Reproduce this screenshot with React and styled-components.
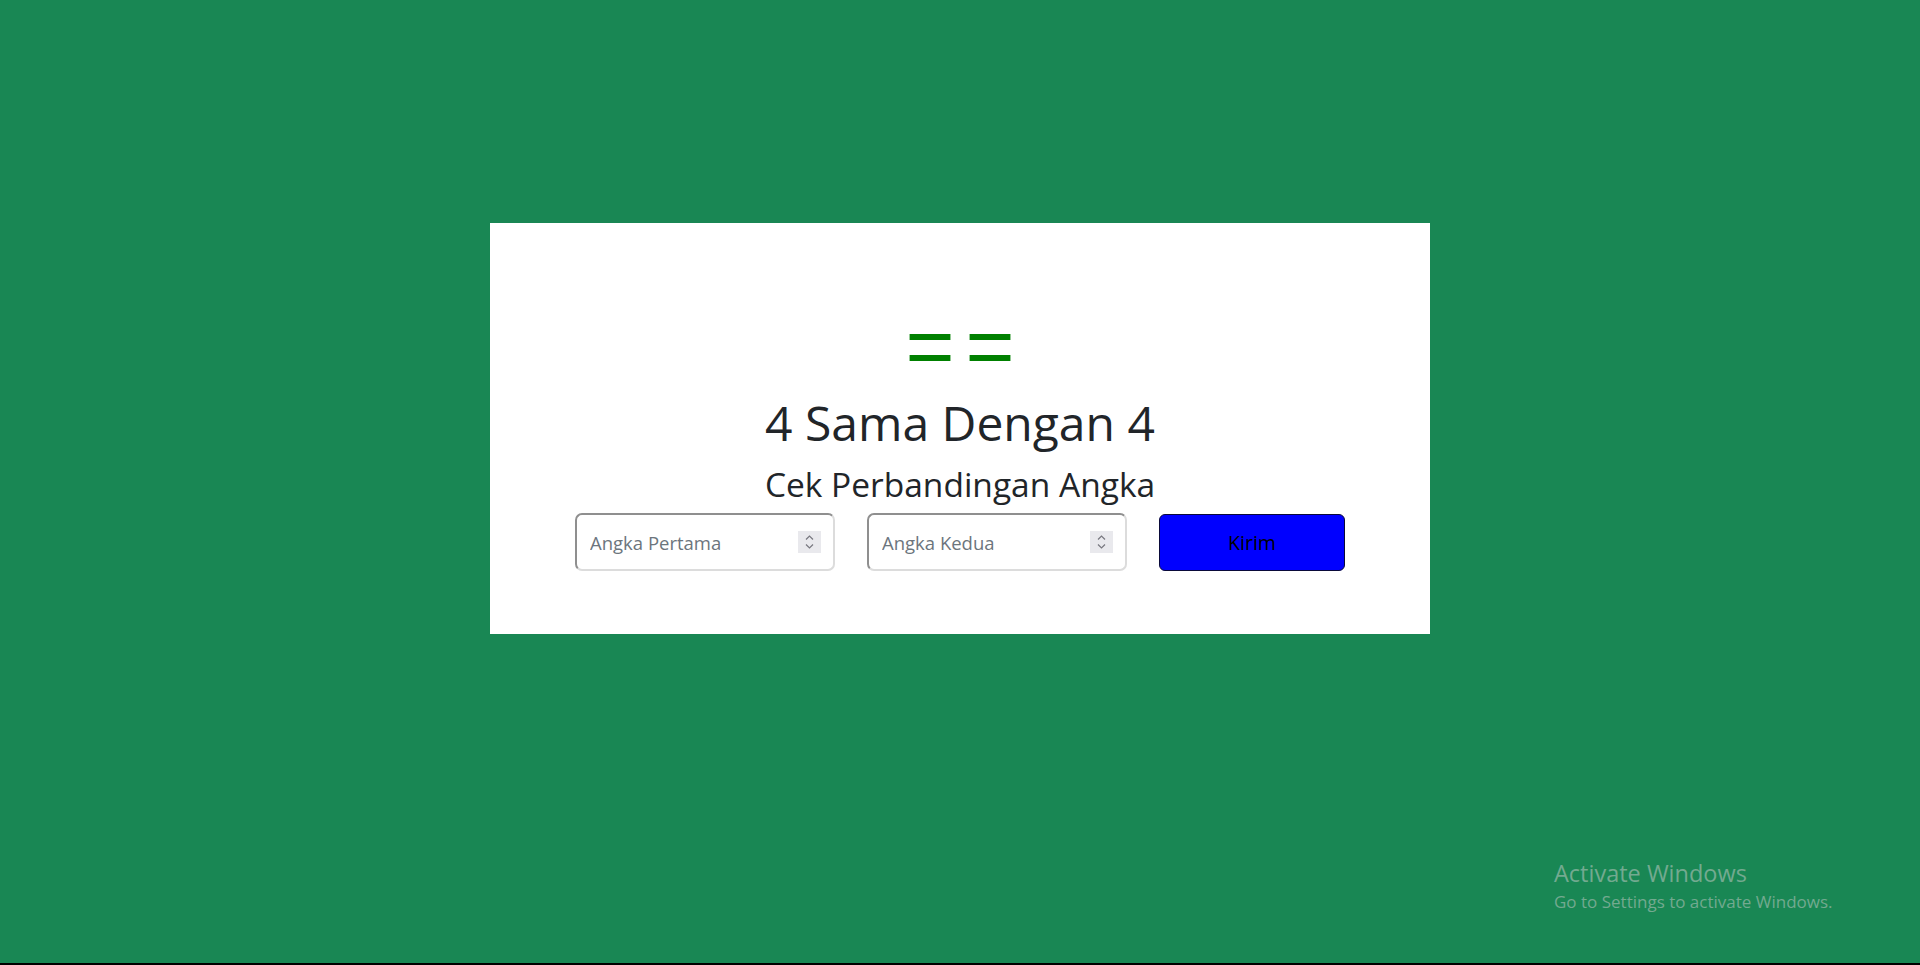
import React from "react";
import styled, { createGlobalStyle } from "styled-components";

const GlobalStyle = createGlobalStyle`
  html, body {
    margin: 0;
    padding: 0;
    background: #000;
  }
  body {
    font-family: "Open Sans", "Noto Sans", sans-serif;
    color: #212529;
  }
  * {
    box-sizing: border-box;
  }
`;

const Page = styled.div`
  position: relative;
  height: 963px;
  background: #198754;
  display: flex;
  flex-direction: column;
  align-items: center;
  padding-top: 223px;
`;

const Card = styled.div`
  width: 940px;
  height: 411px;
  background: #fff;
  display: flex;
  flex-direction: column;
  align-items: center;
  padding-top: 93px;
`;

const Sign = styled.div`
  font-family: "Liberation Sans", Arial, sans-serif;
  color: #008000;
  font-size: 84px;
  line-height: 60px;
  height: 60px;
  letter-spacing: 11px;
  margin-right: -11px;
`;

const Title = styled.h1`
  margin: 19px 0 0;
  font-size: 48px;
  font-weight: 400;
  line-height: 56px;
`;

const Subtitle = styled.h2`
  margin: 13px 0 0;
  font-size: 33.5px;
  font-weight: 400;
  line-height: 40px;
`;

const Row = styled.form`
  display: flex;
  align-items: center;
  gap: 32px;
  margin-top: 9px;
`;

const Field = styled.label`
  width: 260px;
  height: 58px;
  display: flex;
  align-items: center;
  padding: 0 12px 0 13px;
  border: 2px solid;
  border-color: #8f8f8f #dcdcdc #dcdcdc #8f8f8f;
  border-radius: 7px;
  background: #fff;
`;

const Input = styled.input`
  flex: 1;
  min-width: 0;
  border: none;
  outline: none;
  padding: 0;
  font-family: inherit;
  font-size: 18.5px;
  color: #212529;
  background: transparent;

  &::placeholder {
    color: #6c757d;
  }
`;

const Spinner = styled.span`
  width: 23px;
  height: 22px;
  background: #e9e9ed;
  display: flex;
  align-items: center;
  justify-content: center;
`;

const Button = styled.button`
  width: 186px;
  height: 57px;
  background: #0000ff;
  border: 1px solid #0a0a3a;
  border-radius: 6px;
  color: #000;
  font-family: inherit;
  font-size: 19.5px;
  cursor: pointer;
`;

const Watermark = styled.div`
  position: absolute;
  left: 1554px;
  top: 858px;
  color: rgba(205, 205, 205, 0.5);
  pointer-events: none;

  .big {
    font-size: 23.5px;
    line-height: 30px;
  }
  .small {
    font-size: 17px;
    line-height: 22px;
    margin-top: 3px;
  }
`;

function Arrows() {
  return (
    <svg width="11" height="16" viewBox="0 0 11 16" fill="none" stroke="#77777f" strokeWidth="1.2">
      <path d="M2 5.5 L5.5 2 L9 5.5" />
      <path d="M2 10.5 L5.5 14 L9 10.5" />
    </svg>
  );
}

function NumberField({ placeholder }) {
  return (
    <Field>
      <Input type="text" placeholder={placeholder} />
      <Spinner>
        <Arrows />
      </Spinner>
    </Field>
  );
}

export default function App() {
  return (
    <>
      <GlobalStyle />
      <Page>
        <Card>
          <Sign>==</Sign>
          <Title>4 Sama Dengan 4</Title>
          <Subtitle>Cek Perbandingan Angka</Subtitle>
          <Row onSubmit={(e) => e.preventDefault()}>
            <NumberField placeholder="Angka Pertama" />
            <NumberField placeholder="Angka Kedua" />
            <Button type="submit">Kirim</Button>
          </Row>
        </Card>
        <Watermark>
          <div className="big">Activate Windows</div>
          <div className="small">Go to Settings to activate Windows.</div>
        </Watermark>
      </Page>
    </>
  );
}
